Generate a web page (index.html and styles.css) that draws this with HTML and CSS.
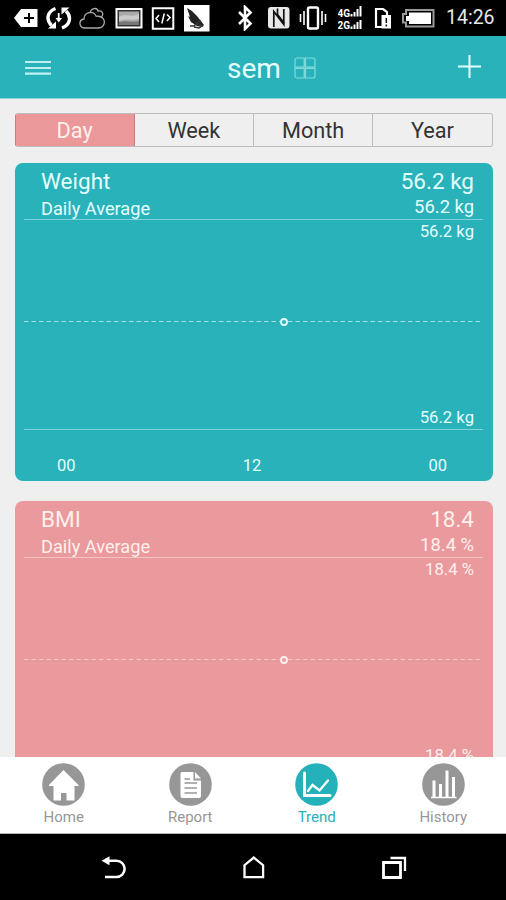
FILE: index.html
```html
<!DOCTYPE html>
<html lang="en">
<head>
<meta charset="utf-8">
<title>Trend</title>
<link rel="stylesheet" href="styles.css">
</head>
<body>
<div class="status">
  <div class="status-left">
    <svg width="24" height="20" viewBox="14 8 24 20"><path d="M14 18l7-9h16.500v18H21z" fill="#fff"/><path d="M24 18h10M29 13v10" stroke="#000" stroke-width="2"/></svg>
    <svg width="26" height="26" viewBox="47 5 26 26" fill="none" stroke="#fff" stroke-width="3.400"><path d="M56.500 8.500c-8 3-10 11-4 17"/><path d="M63 28c8-3 10-11 4-17"/><path d="M49 28.500h8V21.500zM70.500 7.500h-8V14.500z" fill="#fff" stroke="none"/><path d="M59.700 13v7" stroke-width="1.800"/><path d="M56.500 18h6.500l-3.200 4.500z" fill="#fff" stroke="none"/></svg>
    <svg width="28" height="24" viewBox="80 6 28 24" fill="none" stroke="#a8a8a8" stroke-width="1.300"><path d="M86 28c-6 0-7-8-1-9 0-7 9-9 12-3 8 0 9 5 8 8-1 3-3 4-6 4zM91 13c1-5 7-6 8-2 5-1 6 4 3 6"/></svg>
    <svg width="29" height="22" viewBox="113 7 29 22"><path d="M114.500 9h25v18.500h-25z" fill="#333" stroke="#fff" stroke-width="2"/><path d="M117 11.500h20v13.500h-20z" fill="#aaa"/><path d="M117 17c7-4 13 1 20-3v5c-8 2-13-1-20 2z" fill="#ccc"/><path d="M117 22c8-2 13 1 20-1v4h-20z" fill="#777"/></svg>
    <svg width="24" height="24" viewBox="149 6 24 24" fill="none" stroke="#fff"><path d="M150.800 8.300h20.500v20.500h-20.500z" stroke-width="2"/><path d="M157 15l-3 3.500 3 3.500M165 14.500l3 3-3 3.500M162.300 13.500l-2.500 10" stroke-width="1.500"/></svg>
    <svg width="28" height="28" viewBox="181 4 28 28"><path d="M182 5h25.500v26.500H182z" fill="#fff"/><path d="M185 8l5 3 5 5 7 9-2 2-5-1-6-4-3-6 2 1z" fill="#222"/><path d="M188 26h4l3-3 5 3-3 2-5-1M195 22l4-1" fill="none" stroke="#333" stroke-width="1.500"/></svg>
  </div>
  <div class="status-right">
    <svg class="bluetooth" width="16" height="26" viewBox="237 5 16 26" fill="none" stroke="#fff" stroke-width="2.600"><path d="M239 12l11.500 11.500-5.500 5.500V7l5.500 5.500L239 24"/></svg>
    <svg class="nfc" width="22" height="22" viewBox="268 7 22 22"><rect x="268" y="7" width="21.500" height="21.500" rx="3" fill="#e8e8e8"/><path d="M273.800 27V11.500l10 13V9M277.500 8.500v6l7 9" fill="none" stroke="#111" stroke-width="1.700"/></svg>
    <svg class="vibrate" width="28" height="26" viewBox="299 5 28 26" fill="none" stroke="#fff"><rect x="308" y="7.500" width="10" height="21" rx="1.500" stroke-width="2.400"/><path d="M304 11v14M322 11v14M300.500 14v8M325.500 14v8" stroke-width="1.600"/></svg>
    <svg class="signal" width="25" height="24" viewBox="338 7 25 24" fill="#fff"><text class="net" x="337.500" y="17.500">4G</text><text class="net" x="337.500" y="30">2G</text><path d="M350.500 15h2v2.500h-2zM353.500 13h2v4.500h-2zM356.500 10h2v7.500h-2zM359.500 7h2v10.500h-2zM350.500 27.500h2V30h-2zM353.500 25.500h2V30h-2zM356.500 23h2v7h-2zM359.500 21h2v9h-2z"/></svg>
    <svg class="sim" width="18" height="22" viewBox="374 7 18 22"><path d="M376 9h7l4 3v15h-11z" fill="none" stroke="#fff" stroke-width="2.200"/><path d="M381.500 15h9.500v13.500h-9.500z" fill="#fff"/><path d="M386.300 18v5M386.300 24.500v2" stroke="#111" stroke-width="1.500"/></svg>
    <svg class="battery" width="34" height="20" viewBox="401 8 34 20"><path d="M406 10h27.500v16.500H406v-4h-3v-8.500h3z" fill="none" stroke="#999" stroke-width="2"/><path d="M409 12.500h22v11.500h-22v-3h-3v-5h3z" fill="#fff"/></svg>
    <span class="clock">14:26</span>
  </div>
</div>

<header class="bar">
  <svg class="menu" width="26" height="16" viewBox="0 0 26 16"><path d="M0 2h26M0 8h26M0 13.700h26" stroke="#bff0f1" stroke-width="2.200"/></svg>
  <div class="title">sem
    <svg width="22" height="22" viewBox="0 0 22 22" fill="none" stroke="#83dbdc" stroke-width="1.200"><path d="M3 1h7.200v9.200H1V3a2 2 0 0 1 2-2zM11.500 1H19a2 2 0 0 1 2 2v7.200h-9.500zM1 11.500h9.200V21H3a2 2 0 0 1-2-2zM11.500 11.500H21V19a2 2 0 0 1-2 2h-7.500z"/></svg>
  </div>
  <svg class="plus" width="23" height="23" viewBox="0 0 23 23"><path d="M0 11.500h23M11.500 0v23" stroke="#e4ffff" stroke-width="2"/></svg>
</header>

<main class="content">
  <nav class="tabs"><span class="on">Day</span><span>Week</span><span>Month</span><span>Year</span></nav>

  <section class="card teal">
    <div class="head">
      <div class="names"><h2>Weight</h2><p>Daily Average</p></div>
      <div class="values"><h2>56.2 kg</h2><p>56.2 kg</p></div>
    </div>
    <div class="plot">
      <span class="limit">56.2 kg</span>
      <svg class="chart" width="459" height="166" viewBox="0 0 459 166"><path d="M0 79.500h256M264 79.500h195" stroke="#fff" stroke-opacity=".58" stroke-width="1.200" stroke-dasharray="4.500 3"/><circle cx="260" cy="80" r="3" fill="none" stroke="#e4ffff" stroke-width="1.800"/></svg>
      <span class="limit low">56.2 kg</span>
    </div>
    <div class="axis"><span>00</span><span>12</span><span>00</span></div>
  </section>

  <section class="card pink">
    <div class="head">
      <div class="names"><h2>BMI</h2><p>Daily Average</p></div>
      <div class="values"><h2>18.4</h2><p>18.4 %</p></div>
    </div>
    <div class="plot">
      <span class="limit">18.4 %</span>
      <svg class="chart" width="459" height="166" viewBox="0 0 459 166"><path d="M0 79.500h256M264 79.500h195" stroke="#fff" stroke-opacity=".5" stroke-width="1.200" stroke-dasharray="4.500 3"/><circle cx="260" cy="80" r="3" fill="none" stroke="#fff0ee" stroke-width="1.800"/></svg>
      <span class="limit low">18.4 %</span>
    </div>
  </section>
</main>

<nav class="bottom">
  <a><svg width="43" height="43" viewBox="0 0 43 43"><circle cx="21.500" cy="21.500" r="21.300" fill="#979797"/><path d="M21.500 7L36.500 22v1h-4v14.500h-8V30h-5.500v7.500h-7.500V23H7v-1z" fill="#fff"/></svg>Home</a>
  <a><svg width="43" height="43" viewBox="0 0 43 43"><circle cx="21.500" cy="21.500" r="21.300" fill="#979797"/><path d="M12.500 9h12v8.500H32V33a2 2 0 0 1-2 2H13.500a2 2 0 0 1-2-2V10zM26 9l6 6.500h-6z" fill="#fff"/><path d="M15.500 16H21M15.500 20H28M15.500 25H28M15.500 30H28" stroke="#979797" stroke-width="1.500"/></svg>Report</a>
  <a class="on"><svg width="43" height="43" viewBox="0 0 43 43"><circle cx="21.500" cy="21.500" r="21.300" fill="#25b1b9"/><path d="M9.500 10v22.500H35" fill="none" stroke="#fff" stroke-width="3" stroke-linecap="round"/><path d="M13 28l4.500-6 7 5.500 8.500-10" fill="none" stroke="#fff" stroke-width="2.300" stroke-linecap="round"/></svg>Trend</a>
  <a><svg width="43" height="43" viewBox="0 0 43 43"><circle cx="21.500" cy="21.500" r="21.300" fill="#979797"/><path d="M12 17.500V34M18.500 21v13M25 7.500V34M31.500 14v20" fill="none" stroke="#fff" stroke-width="3"/><path d="M9 34.500h25.500" stroke="#fff" stroke-width="1.500"/></svg>History</a>
</nav>

<div class="system">
  <svg width="26" height="24" viewBox="101 854 26 24"><path d="M105 876h11.500a8 8 0 0 0 0-16.300H108" fill="none" stroke="#fff" stroke-width="2.500"/><path d="M101.500 859.700l8-4.500v9z" fill="#fff"/></svg>
  <svg width="22" height="24" viewBox="242.700 854 22 24"><path d="M244.200 876.200v-12l9.300-7.700 9.300 7.700v12z" fill="none" stroke="#fff" stroke-width="2.300"/></svg>
  <svg width="26" height="24" viewBox="381 854 26 24" fill="none" stroke="#fff"><path d="M383.500 861.500h17v15h-17z" stroke-width="2.800"/><path d="M390.500 857h14.500v13" stroke-width="2.300"/></svg>
</div>
</body>
</html>
```
FILE: styles.css
```css
* { box-sizing: border-box; margin: 0; padding: 0; }
body {
  width: 506px;
  height: 900px;
  display: flex;
  flex-direction: column;
  overflow: hidden;
  background: #efefef;
  font-family: Roboto, "Liberation Sans", sans-serif;
}
svg { display: block; flex: none; }
h2, p { font-weight: 400; }

.status {
  flex: none;
  height: 36px;
  padding: 0 10px 0 14px;
  display: flex;
  align-items: center;
  justify-content: space-between;
  background: #000;
}
.status-left { display: flex; align-items: center; gap: 7.600px; }
.status-right { display: flex; align-items: center; }
.bluetooth { margin-right: 15px; }
.nfc, .sim { margin-right: 9px; }
.vibrate, .signal, .battery { margin-right: 11px; }
.net { font: 700 10px Roboto, sans-serif; }
.clock { width: 50px; color: #e8e8e8; font-size: 19.500px; line-height: 38px; white-space: nowrap; }

.bar {
  flex: none;
  height: 63px;
  padding: 0 25px;
  display: flex;
  align-items: center;
  background: #29b2ba;
  border-bottom: 1px solid #8fd6da;
}
.title {
  margin-left: 176px;
  padding-top: 3px;
  display: flex;
  align-items: center;
  gap: 13px;
  color: #e6ffff;
  font-size: 28px;
  line-height: 40px;
}
.title svg { margin-bottom: 2px; }
.menu { margin-top: 1px; }
.plus { margin-left: auto; margin-bottom: 1px; }

.content { flex: 1; min-height: 0; overflow: hidden; padding: 14px 13.500px 0 14.500px; }
.tabs {
  height: 34px;
  display: flex;
  border: 1px solid #bdbdbd;
  border-left: 0;
  border-radius: 3px;
  overflow: hidden;
}
.tabs span {
  flex: 1;
  text-align: center;
  font-size: 21.700px;
  line-height: 33px;
  color: #333;
  border-left: 1px solid #bdbdbd;
}
.tabs .on { background: #eb989b; color: #fff0ee; border-color: #c97d80; }
.tabs .on + span { border-color: #c97d80; }

.card { height: 318px; border-radius: 8px; padding: 5px 9.500px 0; }
.tabs + .card { margin-top: 15.500px; }
.card + .card { margin-top: 20px; }
.teal { background: #29b2ba; color: #e4ffff; --line: #7bd3d7; }
.pink { background: #ea999c; color: #fff0ec; --line: #f3c2c3; }
.head { height: 51px; padding: 0 9px 0 17px; display: flex; justify-content: space-between; }
.head h2 { font-size: 22.500px; line-height: 27px; }
.head p { font-size: 18.200px; line-height: 28px; }
.values { text-align: right; }
.values p { font-size: 18.400px; line-height: 24px; }
.plot {
  height: 211px;
  display: flex;
  flex-direction: column;
  border-top: 1.500px solid var(--line);
  border-bottom: 1.500px solid var(--line);
}
.limit { height: 22px; padding-right: 9px; text-align: right; font-size: 16.700px; line-height: 24px; }
.limit.low { height: 20px; line-height: 20px; }
.axis {
  padding: 25px 36px 0 33px;
  display: flex;
  justify-content: space-between;
  font-size: 16.500px;
  line-height: 22px;
}

.bottom {
  flex: none;
  height: 77px;
  padding-top: 6px;
  display: grid;
  grid-template-columns: repeat(4, 126.500px);
  background: #fff;
  border-bottom: 1px solid #b5b5b5;
}
.bottom a {
  padding-left: 1px;
  display: flex;
  flex-direction: column;
  align-items: center;
  color: #979797;
  font-size: 15px;
  line-height: 22px;
}
.bottom .on { color: #25b1b9; }

.system {
  flex: none;
  height: 66px;
  padding: 0 99px 0 101px;
  display: flex;
  align-items: center;
  justify-content: space-between;
  background: #000;
}
```
